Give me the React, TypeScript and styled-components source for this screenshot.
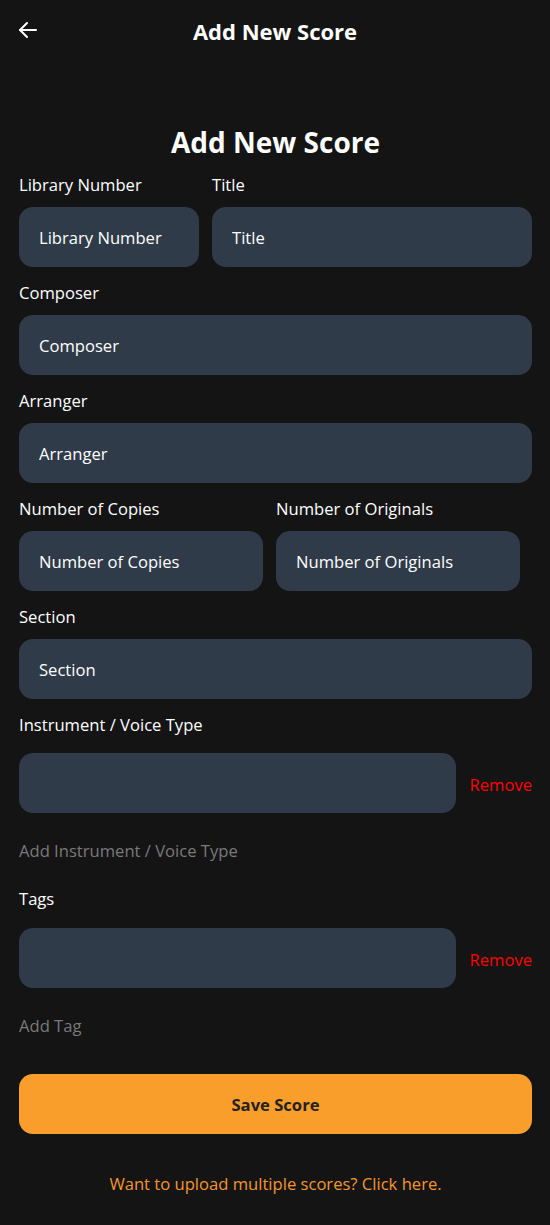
import React from "react";
import styled, { createGlobalStyle } from "styled-components";

const GlobalStyle = createGlobalStyle`
  html, body { margin: 0; padding: 0; background: #141414; }
  body { font-family: "Open Sans", "Noto Sans", sans-serif; color: #ffffff; }
  * { box-sizing: border-box; }
`;

const Page = styled.div`
  width: 550px;
  min-height: 1225px;
  background: #141414;
  display: flex;
  flex-direction: column;
`;

const Header = styled.header`
  height: 62px;
  display: flex;
  align-items: center;
  justify-content: center;
  position: relative;
`;

const BackButton = styled.button`
  position: absolute;
  left: 14px;
  top: 17px;
  width: 28px;
  height: 26px;
  background: none;
  border: none;
  padding: 0;
  display: flex;
  align-items: center;
  justify-content: center;
  color: #fff;
  cursor: pointer;
`;

const HeaderTitle = styled.h1`
  margin: 0;
  font-size: 22px;
  font-weight: 700;
  color: #fff;
`;

const Form = styled.form`
  display: flex;
  flex-direction: column;
  padding: 0 18px 0 19px;
`;

const PageTitle = styled.h2`
  margin: 62px 0 13px;
  text-align: center;
  font-size: 28px;
  line-height: 36px;
  font-weight: 700;
`;

const Row = styled.div<{ $cols: string }>`
  display: grid;
  grid-template-columns: ${(p) => p.$cols};
  column-gap: 13px;
`;

const Field = styled.div<{ $gapAfter?: number }>`
  display: flex;
  flex-direction: column;
  margin-bottom: ${(p) => p.$gapAfter ?? 14}px;
`;

const Label = styled.label<{ $space?: number }>`
  font-size: 16.6px;
  line-height: 24px;
  color: #fff;
  margin-bottom: ${(p) => p.$space ?? 10}px;
`;

const Input = styled.input`
  height: 60px;
  width: 100%;
  border: none;
  outline: none;
  border-radius: 14px;
  background: #2f3b48;
  color: #fff;
  padding: 0 20px;
  font-family: inherit;
  font-size: 16.6px;
  &::placeholder { color: #ffffff; opacity: 1; }
`;

const ListRow = styled.div`
  display: flex;
  align-items: center;
  gap: 13px;
`;

const RemoveButton = styled.button`
  background: none;
  border: none;
  padding: 0;
  margin-top: 3px;
  color: #ff0000;
  font-family: inherit;
  font-size: 16.6px;
  cursor: pointer;
`;

const AddLink = styled.button`
  align-self: flex-start;
  background: none;
  border: none;
  padding: 0;
  color: #7a7a7a;
  font-family: inherit;
  font-size: 16.6px;
  line-height: 24px;
  cursor: pointer;
`;

const SaveButton = styled.button`
  height: 60px;
  width: 100%;
  border: none;
  border-radius: 14px;
  background: #f99d2b;
  color: #222;
  font-family: inherit;
  font-size: 16.6px;
  font-weight: 700;
  cursor: pointer;
`;

const FooterLink = styled.a`
  display: block;
  text-align: center;
  color: #f5962d;
  font-size: 16.6px;
  line-height: 24px;
  margin-top: 38px;
  text-decoration: none;
`;

const ListSection = styled(Field)`
  margin-top: 24px;
`;

const Spacer = styled.div`
  height: 36px;
`;

const singleFields = ["Composer", "Arranger"];

export default function App() {
  return (
    <Page>
      <GlobalStyle />
      <Header>
        <BackButton type="button" aria-label="Back">
          <svg width="24" height="24" viewBox="0 0 24 24" fill="none" stroke="#fff" strokeWidth="2" strokeLinecap="round" strokeLinejoin="round">
            <path d="M20 12H4" />
            <path d="M11 5l-7 7 7 7" />
          </svg>
        </BackButton>
        <HeaderTitle>Add New Score</HeaderTitle>
      </Header>
      <Form onSubmit={(e) => e.preventDefault()}>
        <PageTitle>Add New Score</PageTitle>
        <Row $cols="180px 1fr">
          <Field>
            <Label>Library Number</Label>
            <Input placeholder="Library Number" />
          </Field>
          <Field>
            <Label>Title</Label>
            <Input placeholder="Title" />
          </Field>
        </Row>
        {singleFields.map((f) => (
          <Field key={f}>
            <Label>{f}</Label>
            <Input placeholder={f} />
          </Field>
        ))}
        <Row $cols="244px 244px">
          <Field>
            <Label>Number of Copies</Label>
            <Input placeholder="Number of Copies" />
          </Field>
          <Field>
            <Label>Number of Originals</Label>
            <Input placeholder="Number of Originals" />
          </Field>
        </Row>
        <Field>
          <Label>Section</Label>
          <Input placeholder="Section" />
        </Field>
        <Field $gapAfter={26}>
          <Label $space={16}>Instrument / Voice Type</Label>
          <ListRow>
            <Input />
            <RemoveButton type="button">Remove</RemoveButton>
          </ListRow>
        </Field>
        <AddLink type="button">Add Instrument / Voice Type</AddLink>
        <ListSection $gapAfter={26}>
          <Label $space={17}>Tags</Label>
          <ListRow>
            <Input />
            <RemoveButton type="button">Remove</RemoveButton>
          </ListRow>
        </ListSection>
        <AddLink type="button">Add Tag</AddLink>
        <Spacer />
        <SaveButton type="submit">Save Score</SaveButton>
        <FooterLink href="#">Want to upload multiple scores? Click here.</FooterLink>
      </Form>
    </Page>
  );
}
